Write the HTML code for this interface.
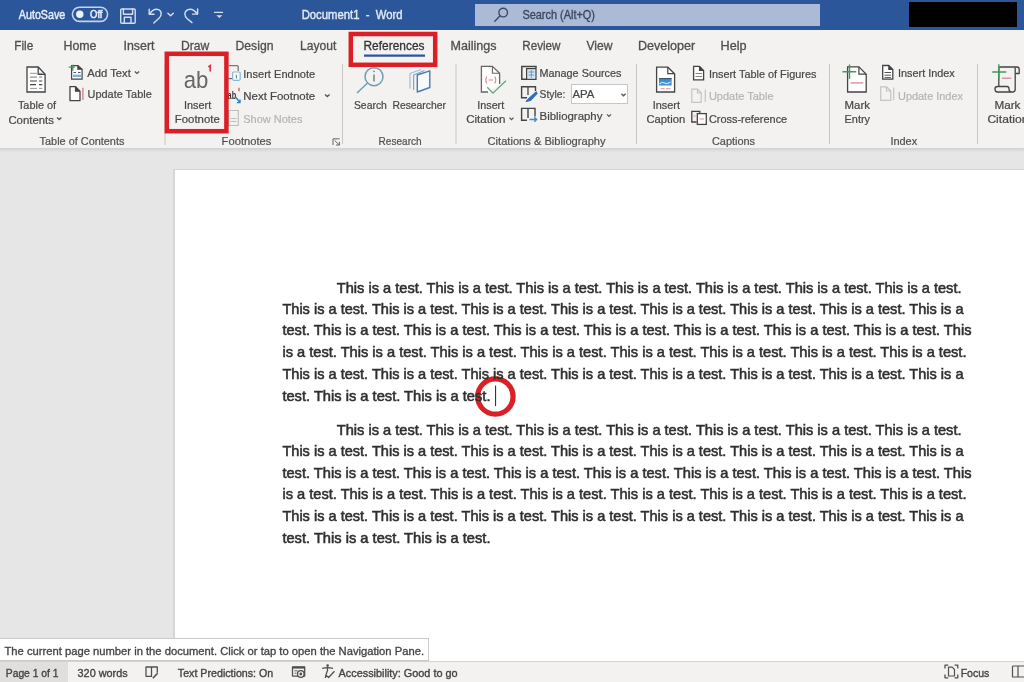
<!DOCTYPE html>
<html><head><meta charset="utf-8">
<style>
html,body{margin:0;padding:0;}
body{width:1024px;height:682px;overflow:hidden;position:relative;background:#e6e6e6;font-family:"Liberation Sans",sans-serif;}
.a{position:absolute;}
svg text{font-family:"Liberation Sans",sans-serif;}
</style></head><body>
<div class="a" style="left:0;top:0;width:1024px;height:30px;background:#2b579a"></div>
<div class="a" style="left:475px;top:3.5px;width:345px;height:22.5px;background:#abbad6"></div>
<div class="a" style="left:908.5px;top:2.4px;width:108.5px;height:24.8px;background:#000"></div>
<div class="a" style="left:0;top:30px;width:1024px;height:118px;background:#f3f2f1"></div>
<div class="a" style="left:0;top:148px;width:1024px;height:4px;background:linear-gradient(#cfd1cf,#e4e4e4)"></div>
<div class="a" style="left:173px;top:168.5px;width:860px;height:500px;background:#fff;border:1px solid #d4d4d4;border-left:2px solid #d6d6d6"></div>
<div class="a" style="left:0;top:661px;width:1024px;height:21px;background:#f3f2f1;border-top:1px solid #d2d2d2;box-sizing:border-box"></div>
<div class="a" style="left:0;top:662px;width:68px;height:20px;background:#e1dfdd"></div>
<div class="a" style="left:0;top:637.8px;width:429px;height:23.5px;background:#fff;border:1px solid #cacaca;border-left:none;box-sizing:border-box"></div>
<div class="a" style="left:571px;top:84px;width:57px;height:20px;background:#fff;border:1px solid #c8c6c4;box-sizing:border-box"></div>
<svg class="a" style="left:0;top:0;will-change:transform" width="1024" height="682" viewBox="0 0 1024 682">
<!-- title bar icons -->
<g fill="none" stroke="#d3def0" stroke-width="1.4" stroke-linecap="round" stroke-linejoin="round">
<rect x="72.4" y="7.2" width="35.2" height="14.2" rx="7.1" stroke-width="1.6" stroke="#c3d3ec"/>
<rect x="120.7" y="9" width="14.5" height="14.2" rx="1"/>
<path d="M123.4,9 V14.2 H132.6 V9"/>
<path d="M124.3,23 V17.2 H131 V23"/>
<path d="M149.2,9.3 V14.3 H154"/>
<path d="M149.5,14 C152,10.5 155.5,8.6 158.5,9.6 C162,11 162,15.5 159,18.2 L153.8,23"/>
<path d="M167.9,13.3 L170.6,15.7 L173.3,13.3" stroke-width="1.5"/>
<path d="M197.6,9 V14.1 H192.5"/>
<path d="M197.3,13.8 C194.5,10.2 190.5,8.5 187.5,9.8 C184,11.5 184.2,16 187,18.5 L192,22.6"/>
<path d="M214.5,12.4 H222.5" stroke-width="1.2"/>
</g>
<circle cx="79.8" cy="14.3" r="3.7" fill="#eef2f8"/>
<path d="M216.3,15.2 H222.4 L219.35,18 Z" fill="#d3def0"/>
<g fill="none" stroke="#3c4a66" stroke-width="1.4" stroke-linecap="round">
<circle cx="503.2" cy="12.6" r="4.3"/>
<path d="M500.1,15.8 L494.8,21.3"/>
</g>
<!-- ribbon icons -->
<g fill="#fff" stroke="#444" stroke-width="1.3" stroke-linejoin="miter">
<!-- TOC -->
<path d="M27,67 H38.2 L45.1,74.3 V92 H27 Z"/>
<path d="M38.2,67 V74.3 H45.1" fill="none"/>
<!-- Add text -->
<path d="M71.6,65.6 H77.9 L82.1,69.2 V79.1 H71.6 Z" stroke-width="1.2"/>
<path d="M77.9,65.6 V69.2 H82.1" fill="#444" stroke-width="1.2"/>
<!-- update table -->
<path d="M70,86.6 H75.5 L80,91.2 V100.6 H70 Z" stroke-width="1.3"/>
<path d="M75.5,86.6 V91.2 H80" fill="#444" stroke-width="1.2"/>
</g>
<g stroke="#555" stroke-width="1.1">
<path d="M30,73.3 H37 M39,73.3 H42.3" stroke="#888" stroke-width="0.9"/>
<path d="M30,77.1 H37 M39,77.1 H42.3" stroke="#777" stroke-width="1"/>
<path d="M30,81 H37 M39,81 H42.3" stroke="#444" stroke-width="1.2"/>
<path d="M30,84.7 H36 M39,84.7 H42.3" stroke="#444" stroke-width="1.2"/>
<path d="M30,88.4 H37 M39,88.4 H42.3" stroke="#888" stroke-width="0.9"/>
<path d="M73.5,72.5 H76 M78,72.5 H80.5" stroke="#555" stroke-width="1"/>
</g>
<rect x="73" y="74.6" width="8" height="2.4" fill="#7fb2dd"/>
<path d="M68.7,67.1 H74.8 M72.8,64.7 V70.8" stroke="#3f9a5a" stroke-width="1.3"/>
<path d="M82.9,87.7 V100" stroke="#d9808c" stroke-width="1.4"/>
<!-- footnotes group -->
<path d="M228.7,65.6 H237.2 Q238.2,65.6 238.2,66.6 V71" fill="none" stroke="#777" stroke-width="1.3"/>
<path d="M228.3,78.6 H232" fill="none" stroke="#666" stroke-width="1.2"/>
<rect x="232.6" y="72" width="7.6" height="8.3" rx="1.2" fill="#f4f8fb" stroke="#86b6dc" stroke-width="1.2"/>
<path d="M236.4,74.8 V78.4" stroke="#55799a" stroke-width="1"/>
<text x="227.6" y="99" font-size="11.5" fill="#333" font-weight="bold" textLength="8.6" lengthAdjust="spacingAndGlyphs" style="font-family:'Liberation Sans'">ab</text>
<path d="M239,87.8 V91.3" stroke="#d33" stroke-width="1.1"/>
<path d="M235.5,97 L239.8,102.2 M236.8,102.6 H240 V99.4" fill="none" stroke="#2f80c8" stroke-width="1.4"/>
<g fill="none" stroke="#bdbdbd" stroke-width="1.1">
<path d="M228.7,110.5 H238.3 V125.5 H228.7 Z"/>
<path d="M230.5,118.5 H236.5 M230.5,121.5 H236.5"/>
</g>
<!-- dialog launcher -->
<path d="M333,145 V138.8 H339.6 M334.6,140.4 L339.4,145 M339.4,141.8 V145 H336" fill="none" stroke="#666" stroke-width="1"/>
<!-- research -->
<g fill="none" stroke="#6a9fb8" stroke-width="1.5">
<circle cx="374" cy="76.7" r="9"/>
<path d="M367.3,83.2 L357,93"/>
</g>
<path d="M374,74.5 V81.5" stroke="#777" stroke-width="1.4"/>
<circle cx="374" cy="71.4" r="0.8" fill="#777"/>
<g fill="none" stroke-linejoin="round">
<path d="M410,88.5 V73.5 L421,69.5" stroke="#9cbfdc" stroke-width="1.2"/>
<path d="M413.6,90 V75 L424.5,70.5" stroke="#7aa6cf" stroke-width="1.2"/>
<path d="M417.3,75 L429.8,70.8 V87.5 L417.3,92 Z" stroke="#4a7bb0" stroke-width="1.4" fill="#f7f9fc"/>
</g>
<!-- insert citation -->
<path d="M488,92 H481.4 V66.4 H492.4 L499.6,73.3 V84" fill="#fff" stroke="#666" stroke-width="1.3"/>
<path d="M492.4,66.4 V73.3 H499.6" fill="none" stroke="#666" stroke-width="1.1"/>
<path d="M486.8,76.5 Q484.8,80 486.8,83.5 M494.8,76.5 Q496.8,80 494.8,83.5 M488.5,80 H493" fill="none" stroke="#d98a94" stroke-width="1.1"/>
<path d="M487.3,87.3 L492.9,93.2 L506,80.8" fill="none" stroke="#5aab7a" stroke-width="1.3"/>
<!-- manage sources -->
<path d="M526,79.2 H521.8 V66.6 H536 V68" fill="none" stroke="#444" stroke-width="1.5"/>
<rect x="526.6" y="68.6" width="9.4" height="10.8" fill="#d6e6f4" stroke="#444" stroke-width="1.2"/>
<path d="M528.5,72 H534.2 M528.5,75 H534.2" stroke="#5b8fc0" stroke-width="0.9"/>
<path d="M531.3,70 V78" stroke="#5b8fc0" stroke-width="0.8"/>
<!-- style -->
<path d="M527,97.8 H521.6 V86.8 H528 M528,86.8 H535.5 V91" fill="none" stroke="#444" stroke-width="1.4"/>
<path d="M528,86.8 V95" fill="none" stroke="#444" stroke-width="1.3"/>
<path d="M536.5,91.6 L529,98.5 L526.3,101.5 L530.3,100.5 L537.3,93" fill="#2e6fb5" stroke="#2e6fb5" stroke-width="1.2" stroke-linejoin="round"/>
<!-- bibliography -->
<path d="M527,120.3 H521.6 V108.4 H535 V116.5 M528,108.4 V118" fill="none" stroke="#444" stroke-width="1.4"/>
<path d="M529.5,119.5 H536.5 M534.3,117.2 L536.7,119.5 L534.3,121.8" fill="none" stroke="#3a8ad0" stroke-width="1.3"/>
<!-- insert caption -->
<path d="M656.6,67.2 H667.8 L674.6,73.7 V92 H656.6 Z" fill="#fff" stroke="#444" stroke-width="1.3"/>
<path d="M667.8,67.2 V73.7 H674.6" fill="none" stroke="#444" stroke-width="1.2"/>
<rect x="659" y="78.2" width="12.6" height="7.3" fill="#3c8fd0"/>
<path d="M659,78.6 H671.6" stroke="#3a4a5a" stroke-width="1"/>
<path d="M659.5,84 Q662,81.5 664.5,83 T670.5,82" fill="none" stroke="#bfe0f5" stroke-width="1.2"/>
<path d="M660.5,88.7 H664.5 M666,88.7 H670.5" stroke="#d98a94" stroke-width="0.9"/>
<!-- insert table of figures -->
<path d="M693.6,66.3 H699.5 L703.6,70.5 V79.8 H693.6 Z" fill="#fff" stroke="#444" stroke-width="1.3"/>
<path d="M699.5,66.3 V70.5 H703.6" fill="#444" stroke="#444" stroke-width="1.1"/>
<path d="M695.5,73.5 H702 M695.5,76.5 H702" stroke="#777" stroke-width="0.9"/>
<!-- update table (disabled) -->
<g fill="none" stroke="#c4c4c4" stroke-width="1.2">
<path d="M691.8,89.2 H697.5 L701.2,93 V102.3 H691.8 Z"/>
<path d="M697.5,89.2 V93 H701.2"/>
<path d="M705.3,89.5 V102"/>
</g>
<!-- cross reference -->
<path d="M696.5,122 H691.8 V111.3 H699.8 V113" fill="none" stroke="#444" stroke-width="1.3"/>
<rect x="697.3" y="113.6" width="9" height="10.8" fill="#fff" stroke="#444" stroke-width="1.3"/>
<path d="M699.5,119 H704 M693.5,116 H695.5" stroke="#d98a94" stroke-width="1"/>
<!-- mark entry -->
<path d="M847.6,66.9 H858.9 L866.2,74.2 V92 H847.6 Z" fill="#fff" stroke="#444" stroke-width="1.3"/>
<path d="M858.9,66.9 V74.2 H866.2" fill="none" stroke="#444" stroke-width="1.2"/>
<path d="M842.4,71.8 H856.2 M849.5,64.4 V78.9" stroke="#3f9a5a" stroke-width="1.4"/>
<path d="M850.5,82.9 H863.3" stroke="#d98a94" stroke-width="1.3"/>
<!-- insert index -->
<path d="M882.7,65.5 H888.8 L892.8,69.5 V79.1 H882.7 Z" fill="#fff" stroke="#444" stroke-width="1.3"/>
<path d="M888.8,65.5 V69.5 H892.8" fill="#444" stroke="#444" stroke-width="1.1"/>
<path d="M884.5,72.5 H891 M884.5,75.2 H891 M884.5,77.6 H891" stroke="#555" stroke-width="1"/>
<!-- update index disabled -->
<g fill="none" stroke="#c4c4c4" stroke-width="1.2">
<path d="M880.7,86.8 H886.5 L890.8,91 V100.3 H880.7 Z"/>
<path d="M886.5,86.8 V91 H890.8"/>
<path d="M893.7,87.5 V100"/>
</g>
<!-- mark citation -->
<g fill="none" stroke="#444" stroke-width="1.3" stroke-linejoin="round">
<path d="M999.2,67 H1017 Q1019.2,67 1019.2,69.5 V73.5 H1015.5"/>
<path d="M1015.2,67.5 V89.5 Q1015.2,92 1012.5,92 H997.5 Q995,92 995,89 Q995,86.5 997.5,86.5 H1007 Q1009,86.5 1009,89 Q1009,92 1011.5,92"/>
<path d="M998.8,86.5 V67" />
</g>
<path d="M992.2,72 H1006.3 M998.8,64.2 V79" stroke="#3f9a5a" stroke-width="1.4"/>
<path d="M1001.9,78.2 H1011.3" stroke="#d98a94" stroke-width="1.3"/>
<!-- chevrons -->
<g fill="none" stroke="#555" stroke-width="1.3">
<path d="M57,117.6 L59.2,119.6 L61.4,117.6"/>
<path d="M134.8,71.4 L137,73.4 L139.2,71.4"/>
<path d="M325,94.6 L327.3,96.6 L329.6,94.6"/>
<path d="M509.5,117.6 L511.5,119.6 L513.5,117.6"/>
<path d="M607,114.4 L609,116.4 L611,114.4"/>
<path d="M621.4,93.8 L623.5,95.8 L625.6,93.8"/>
</g>
<!-- separators -->
<g stroke="#c8c6c4" stroke-width="1">
<path d="M165,64 V145"/>
<path d="M342.5,64 V144"/>
<path d="M456,64 V144"/>
<path d="M636.5,64 V144"/>
<path d="M829.5,64 V144"/>
<path d="M977.5,64 V144"/>
</g>
<!-- red boxes -->
<rect x="166.8" y="53.8" width="59.6" height="77.4" fill="none" stroke="#dc1f26" stroke-width="4.5"/>
<rect x="350.8" y="34" width="84.4" height="30.8" fill="none" stroke="#dc1f26" stroke-width="4.5"/>
<path d="M364,55.7 H425" stroke="#2b579a" stroke-width="2.3"/>
<!-- ab footnote big -->
<text x="183.8" y="88.3" font-size="24.5" fill="#666" textLength="24.6" lengthAdjust="spacingAndGlyphs" style="font-family:'Liberation Sans'">ab</text>
<path d="M208.3,67 L210.2,65.6 V71.4" fill="none" stroke="#d52b30" stroke-width="1.5"/>
<!-- red circle + cursor -->
<circle cx="495.4" cy="396.5" r="17.7" fill="none" stroke="#dc1f26" stroke-width="5.2"/>
<path d="M495.6,385.5 V406" stroke="#222" stroke-width="1"/>
<!-- status bar icons -->
<g fill="none" stroke="#505050" stroke-width="1.3" stroke-linejoin="round">
<path d="M151.5,667 H146 V676.3 H151.5 Z M151.5,667 H157.3 V672.8"/>
<path d="M157.6,673.2 L152.8,678.2" stroke-width="1.6"/>
<rect x="292.5" y="666.8" width="12.2" height="9.3"/>
<path d="M292.5,667.6 H304.7" stroke-width="2"/>
<path d="M294.5,670.8 H297.5 M294.5,673.2 H296.5" stroke-width="0.9"/>
<circle cx="300.8" cy="674" r="3.3" fill="#f3f2f1"/>
<path d="M322.2,668.3 Q327.5,666.8 333,668.3 M327.5,668 V670.5 M327.5,670.5 Q326,674 325.3,678 M326,675.2 L328.6,677.5 L334.5,671.3"/>
<path d="M945,668.5 V665.2 H948.2 M954.6,665.2 H957.8 V668.5 M957.8,674.5 V677.8 H954.6 M948.2,677.8 H945 V674.5" stroke-width="1.3"/>
<path d="M948.5,667.2 H952.2 L954.5,669.5 V676 H948.5 Z" stroke-width="1.2"/>
<path d="M1012.5,666 H1024 M1012.5,666 V677 H1024 M1018,666 V677" stroke-width="1.2"/>
</g>
<circle cx="300.8" cy="674" r="1.4" fill="#505050"/>
<circle cx="327.6" cy="665.6" r="1.3" fill="#505050"/>

<text x="18.8" y="18.8" font-size="12.5" fill="#e8eef7" stroke="#e8eef7" stroke-width="0.45" font-weight="normal" textLength="46.5" lengthAdjust="spacingAndGlyphs" >AutoSave</text>
<text x="301.7" y="18.8" font-size="12.5" fill="#e3eaf5" stroke="#e3eaf5" stroke-width="0.4" font-weight="normal" textLength="100.8" lengthAdjust="spacingAndGlyphs" xml:space="preserve">Document1  -  Word</text>
<text x="522.4" y="18.5" font-size="12" fill="#3a4862" stroke="#3a4862" stroke-width="0.35" font-weight="normal" textLength="72.6" lengthAdjust="spacingAndGlyphs" >Search (Alt+Q)</text>
<text x="90.0" y="18.2" font-size="10" fill="#e8eef7" stroke="#e8eef7" stroke-width="0.5" font-weight="normal" textLength="12.5" lengthAdjust="spacingAndGlyphs" >Off</text>
<text x="14.3" y="49.6" font-size="12.5" fill="#4e4e4e" stroke="#4e4e4e" stroke-width="0.3" font-weight="normal" textLength="19.0" lengthAdjust="spacingAndGlyphs" >File</text>
<text x="63.5" y="49.6" font-size="12.5" fill="#4e4e4e" stroke="#4e4e4e" stroke-width="0.3" font-weight="normal" textLength="33.0" lengthAdjust="spacingAndGlyphs" >Home</text>
<text x="123.5" y="49.6" font-size="12.5" fill="#4e4e4e" stroke="#4e4e4e" stroke-width="0.3" font-weight="normal" textLength="31.0" lengthAdjust="spacingAndGlyphs" >Insert</text>
<text x="181.0" y="49.6" font-size="12.5" fill="#4e4e4e" stroke="#4e4e4e" stroke-width="0.3" font-weight="normal" textLength="28.3" lengthAdjust="spacingAndGlyphs" >Draw</text>
<text x="235.5" y="49.6" font-size="12.5" fill="#4e4e4e" stroke="#4e4e4e" stroke-width="0.3" font-weight="normal" textLength="38.0" lengthAdjust="spacingAndGlyphs" >Design</text>
<text x="300.1" y="49.6" font-size="12.5" fill="#4e4e4e" stroke="#4e4e4e" stroke-width="0.3" font-weight="normal" textLength="36.2" lengthAdjust="spacingAndGlyphs" >Layout</text>
<text x="363.5" y="49.6" font-size="12.5" fill="#333" stroke="#333" stroke-width="0.3" font-weight="normal" textLength="61.0" lengthAdjust="spacingAndGlyphs" >References</text>
<text x="450.5" y="49.6" font-size="12.5" fill="#4e4e4e" stroke="#4e4e4e" stroke-width="0.3" font-weight="normal" textLength="46.0" lengthAdjust="spacingAndGlyphs" >Mailings</text>
<text x="522.3" y="49.6" font-size="12.5" fill="#4e4e4e" stroke="#4e4e4e" stroke-width="0.3" font-weight="normal" textLength="38.2" lengthAdjust="spacingAndGlyphs" >Review</text>
<text x="586.5" y="49.6" font-size="12.5" fill="#4e4e4e" stroke="#4e4e4e" stroke-width="0.3" font-weight="normal" textLength="26.0" lengthAdjust="spacingAndGlyphs" >View</text>
<text x="637.9" y="49.6" font-size="12.5" fill="#4e4e4e" stroke="#4e4e4e" stroke-width="0.3" font-weight="normal" textLength="57.3" lengthAdjust="spacingAndGlyphs" >Developer</text>
<text x="720.5" y="49.6" font-size="12.5" fill="#4e4e4e" stroke="#4e4e4e" stroke-width="0.3" font-weight="normal" textLength="26.0" lengthAdjust="spacingAndGlyphs" >Help</text>
<text x="17.9" y="108.6" font-size="11.5" fill="#474747" stroke="#474747" stroke-width="0.22" font-weight="normal" textLength="38.2" lengthAdjust="spacingAndGlyphs" >Table of</text>
<text x="8.4" y="123.7" font-size="11.5" fill="#474747" stroke="#474747" stroke-width="0.22" font-weight="normal" textLength="45.5" lengthAdjust="spacingAndGlyphs" >Contents</text>
<text x="87.3" y="76.6" font-size="11.5" fill="#474747" stroke="#474747" stroke-width="0.22" font-weight="normal" textLength="43.5" lengthAdjust="spacingAndGlyphs" >Add Text</text>
<text x="87.6" y="98.1" font-size="11.5" fill="#474747" stroke="#474747" stroke-width="0.22" font-weight="normal" textLength="64.1" lengthAdjust="spacingAndGlyphs" >Update Table</text>
<text x="184.0" y="108.7" font-size="11.5" fill="#474747" stroke="#474747" stroke-width="0.22" font-weight="normal" textLength="27.2" lengthAdjust="spacingAndGlyphs" >Insert</text>
<text x="174.8" y="123.3" font-size="11.5" fill="#474747" stroke="#474747" stroke-width="0.22" font-weight="normal" textLength="45.0" lengthAdjust="spacingAndGlyphs" >Footnote</text>
<text x="243.3" y="77.8" font-size="11.5" fill="#474747" stroke="#474747" stroke-width="0.22" font-weight="normal" textLength="71.9" lengthAdjust="spacingAndGlyphs" >Insert Endnote</text>
<text x="243.3" y="100.3" font-size="11.5" fill="#474747" stroke="#474747" stroke-width="0.22" font-weight="normal" textLength="71.9" lengthAdjust="spacingAndGlyphs" >Next Footnote</text>
<text x="243.3" y="122.7" font-size="11.5" fill="#b4b4b4" stroke="#b4b4b4" stroke-width="0.22" font-weight="normal" textLength="59.1" lengthAdjust="spacingAndGlyphs" >Show Notes</text>
<text x="353.9" y="108.8" font-size="11.5" fill="#474747" stroke="#474747" stroke-width="0.22" font-weight="normal" textLength="33.0" lengthAdjust="spacingAndGlyphs" >Search</text>
<text x="392.4" y="108.8" font-size="11.5" fill="#474747" stroke="#474747" stroke-width="0.22" font-weight="normal" textLength="53.6" lengthAdjust="spacingAndGlyphs" >Researcher</text>
<text x="477.3" y="108.8" font-size="11.5" fill="#474747" stroke="#474747" stroke-width="0.22" font-weight="normal" textLength="26.9" lengthAdjust="spacingAndGlyphs" >Insert</text>
<text x="466.2" y="123.4" font-size="11.5" fill="#474747" stroke="#474747" stroke-width="0.22" font-weight="normal" textLength="39.2" lengthAdjust="spacingAndGlyphs" >Citation</text>
<text x="539.5" y="76.9" font-size="11.5" fill="#474747" stroke="#474747" stroke-width="0.22" font-weight="normal" textLength="81.9" lengthAdjust="spacingAndGlyphs" >Manage Sources</text>
<text x="539.6" y="98.3" font-size="11.5" fill="#474747" stroke="#474747" stroke-width="0.22" font-weight="normal" textLength="25.8" lengthAdjust="spacingAndGlyphs" >Style:</text>
<text x="572.5" y="98.3" font-size="11.5" fill="#474747" stroke="#474747" stroke-width="0.22" font-weight="normal" textLength="21.9" lengthAdjust="spacingAndGlyphs" >APA</text>
<text x="539.6" y="120.0" font-size="11.5" fill="#474747" stroke="#474747" stroke-width="0.22" font-weight="normal" textLength="62.8" lengthAdjust="spacingAndGlyphs" >Bibliography</text>
<text x="652.8" y="108.8" font-size="11.5" fill="#474747" stroke="#474747" stroke-width="0.22" font-weight="normal" textLength="27.2" lengthAdjust="spacingAndGlyphs" >Insert</text>
<text x="646.4" y="123.0" font-size="11.5" fill="#474747" stroke="#474747" stroke-width="0.22" font-weight="normal" textLength="38.8" lengthAdjust="spacingAndGlyphs" >Caption</text>
<text x="708.9" y="77.8" font-size="11.5" fill="#474747" stroke="#474747" stroke-width="0.22" font-weight="normal" textLength="107.5" lengthAdjust="spacingAndGlyphs" >Insert Table of Figures</text>
<text x="708.9" y="100.3" font-size="11.5" fill="#b4b4b4" stroke="#b4b4b4" stroke-width="0.22" font-weight="normal" textLength="64.6" lengthAdjust="spacingAndGlyphs" >Update Table</text>
<text x="708.9" y="122.9" font-size="11.5" fill="#474747" stroke="#474747" stroke-width="0.22" font-weight="normal" textLength="78.3" lengthAdjust="spacingAndGlyphs" >Cross-reference</text>
<text x="844.6" y="108.5" font-size="11.5" fill="#474747" stroke="#474747" stroke-width="0.22" font-weight="normal" textLength="25.4" lengthAdjust="spacingAndGlyphs" >Mark</text>
<text x="844.6" y="123.2" font-size="11.5" fill="#474747" stroke="#474747" stroke-width="0.22" font-weight="normal" textLength="25.4" lengthAdjust="spacingAndGlyphs" >Entry</text>
<text x="898.0" y="77.3" font-size="11.5" fill="#474747" stroke="#474747" stroke-width="0.22" font-weight="normal" textLength="56.8" lengthAdjust="spacingAndGlyphs" >Insert Index</text>
<text x="898.0" y="100.3" font-size="11.5" fill="#b4b4b4" stroke="#b4b4b4" stroke-width="0.22" font-weight="normal" textLength="65.0" lengthAdjust="spacingAndGlyphs" >Update Index</text>
<text x="994.4" y="108.8" font-size="11.5" fill="#474747" stroke="#474747" stroke-width="0.22" font-weight="normal" textLength="26.0" lengthAdjust="spacingAndGlyphs" >Mark</text>
<text x="987.4" y="123.0" font-size="11.5" fill="#474747" stroke="#474747" stroke-width="0.22" font-weight="normal" textLength="41.0" lengthAdjust="spacingAndGlyphs" >Citation</text>
<text x="39.6" y="145.1" font-size="11.5" fill="#505050" stroke="#505050" stroke-width="0.22" font-weight="normal" textLength="84.8" lengthAdjust="spacingAndGlyphs" >Table of Contents</text>
<text x="221.6" y="145.1" font-size="11.5" fill="#505050" stroke="#505050" stroke-width="0.22" font-weight="normal" textLength="49.8" lengthAdjust="spacingAndGlyphs" >Footnotes</text>
<text x="378.6" y="145.1" font-size="11.5" fill="#505050" stroke="#505050" stroke-width="0.22" font-weight="normal" textLength="43.0" lengthAdjust="spacingAndGlyphs" >Research</text>
<text x="487.6" y="145.1" font-size="11.5" fill="#505050" stroke="#505050" stroke-width="0.22" font-weight="normal" textLength="118.0" lengthAdjust="spacingAndGlyphs" >Citations &amp; Bibliography</text>
<text x="711.9" y="145.1" font-size="11.5" fill="#505050" stroke="#505050" stroke-width="0.22" font-weight="normal" textLength="43.2" lengthAdjust="spacingAndGlyphs" >Captions</text>
<text x="890.4" y="145.1" font-size="11.5" fill="#505050" stroke="#505050" stroke-width="0.22" font-weight="normal" textLength="26.8" lengthAdjust="spacingAndGlyphs" >Index</text>
<text x="5.8" y="676.5" font-size="11" fill="#444" stroke="#444" stroke-width="0.35" font-weight="normal" textLength="52.7" lengthAdjust="spacingAndGlyphs" >Page 1 of 1</text>
<text x="77.6" y="676.5" font-size="11" fill="#444" stroke="#444" stroke-width="0.35" font-weight="normal" textLength="50.0" lengthAdjust="spacingAndGlyphs" >320 words</text>
<text x="177.8" y="676.5" font-size="11" fill="#444" stroke="#444" stroke-width="0.35" font-weight="normal" textLength="95.5" lengthAdjust="spacingAndGlyphs" >Text Predictions: On</text>
<text x="338.6" y="676.5" font-size="11" fill="#444" stroke="#444" stroke-width="0.35" font-weight="normal" textLength="119.0" lengthAdjust="spacingAndGlyphs" >Accessibility: Good to go</text>
<text x="960.7" y="676.5" font-size="11" fill="#444" stroke="#444" stroke-width="0.35" font-weight="normal" textLength="28.7" lengthAdjust="spacingAndGlyphs" >Focus</text>
<text x="4.5" y="654.6" font-size="11.5" fill="#444" stroke="#444" stroke-width="0.32" font-weight="normal" textLength="419.5" lengthAdjust="spacingAndGlyphs" >The current page number in the document. Click or tap to open the Navigation Pane.</text>
<text x="336.8" y="292.8" font-size="14.5" fill="#2f2f2f" stroke="#2f2f2f" stroke-width="0.55" font-weight="normal" textLength="624.7" lengthAdjust="spacingAndGlyphs" xml:space="preserve">This is a test. This is a test. This is a test. This is a test. This is a test. This is a test. This is a test.</text>
<text x="282.4" y="314.2" font-size="14.5" fill="#2f2f2f" stroke="#2f2f2f" stroke-width="0.55" font-weight="normal" textLength="681.1" lengthAdjust="spacingAndGlyphs" xml:space="preserve">This is a test. This is a test. This is a test. This is a test. This is a test. This is a test. This is a test. This is a</text>
<text x="282.4" y="335.4" font-size="14.5" fill="#2f2f2f" stroke="#2f2f2f" stroke-width="0.55" font-weight="normal" textLength="689.1" lengthAdjust="spacingAndGlyphs" xml:space="preserve">test. This is a test. This is a test. This is a test. This is a test. This is a test. This is a test. This is a test. This</text>
<text x="282.4" y="357.1" font-size="14.5" fill="#2f2f2f" stroke="#2f2f2f" stroke-width="0.55" font-weight="normal" textLength="684.1" lengthAdjust="spacingAndGlyphs" xml:space="preserve">is a test. This is a test. This is a test. This is a test. This is a test. This is a test. This is a test. This is a test.</text>
<text x="282.4" y="378.9" font-size="14.5" fill="#2f2f2f" stroke="#2f2f2f" stroke-width="0.55" font-weight="normal" textLength="681.1" lengthAdjust="spacingAndGlyphs" xml:space="preserve">This is a test. This is a test. This is a test. This is a test. This is a test. This is a test. This is a test. This is a</text>
<text x="282.4" y="400.7" font-size="14.5" fill="#2f2f2f" stroke="#2f2f2f" stroke-width="0.55" font-weight="normal" textLength="208.1" lengthAdjust="spacingAndGlyphs" xml:space="preserve">test. This is a test. This is a test.</text>
<text x="336.8" y="434.6" font-size="14.5" fill="#2f2f2f" stroke="#2f2f2f" stroke-width="0.55" font-weight="normal" textLength="624.7" lengthAdjust="spacingAndGlyphs" xml:space="preserve">This is a test. This is a test. This is a test. This is a test. This is a test. This is a test. This is a test.</text>
<text x="282.4" y="456.2" font-size="14.5" fill="#2f2f2f" stroke="#2f2f2f" stroke-width="0.55" font-weight="normal" textLength="681.1" lengthAdjust="spacingAndGlyphs" xml:space="preserve">This is a test. This is a test. This is a test. This is a test. This is a test. This is a test. This is a test. This is a</text>
<text x="282.4" y="477.6" font-size="14.5" fill="#2f2f2f" stroke="#2f2f2f" stroke-width="0.55" font-weight="normal" textLength="689.1" lengthAdjust="spacingAndGlyphs" xml:space="preserve">test. This is a test. This is a test. This is a test. This is a test. This is a test. This is a test. This is a test. This</text>
<text x="282.4" y="499.0" font-size="14.5" fill="#2f2f2f" stroke="#2f2f2f" stroke-width="0.55" font-weight="normal" textLength="684.1" lengthAdjust="spacingAndGlyphs" xml:space="preserve">is a test. This is a test. This is a test. This is a test. This is a test. This is a test. This is a test. This is a test.</text>
<text x="282.4" y="521.0" font-size="14.5" fill="#2f2f2f" stroke="#2f2f2f" stroke-width="0.55" font-weight="normal" textLength="681.1" lengthAdjust="spacingAndGlyphs" xml:space="preserve">This is a test. This is a test. This is a test. This is a test. This is a test. This is a test. This is a test. This is a</text>
<text x="282.4" y="543.0" font-size="14.5" fill="#2f2f2f" stroke="#2f2f2f" stroke-width="0.55" font-weight="normal" textLength="208.1" lengthAdjust="spacingAndGlyphs" xml:space="preserve">test. This is a test. This is a test.</text>
</svg>
</body></html>
